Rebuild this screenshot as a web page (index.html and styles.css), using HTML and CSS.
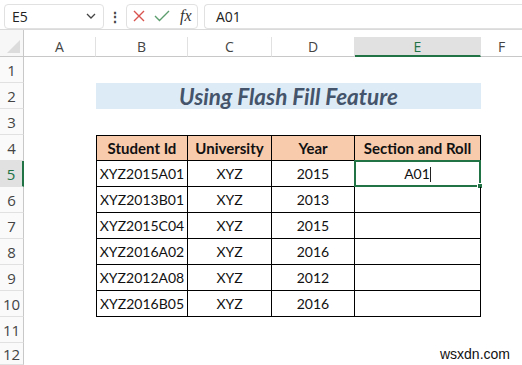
FILE: index.html
```html
<!DOCTYPE html>
<html lang="en">
<head>
<meta charset="UTF-8">
<title>Using Flash Fill Feature</title>
<link rel="stylesheet" href="styles.css">
</head>
<body>

<div class="formula-bar">
  <div class="name-box">
    <span>E5</span>
    <svg class="chevron" width="10" height="6" viewBox="0 0 10 6"><path d="M1 1 L5 5 L9 1" fill="none" stroke="#444" stroke-width="1.3"/></svg>
  </div>
  <div class="dots">&#8942;</div>
  <div class="fx-box">
    <svg width="14" height="14" viewBox="0 0 14 14"><path d="M2 2 L12 12 M12 2 L2 12" stroke="#d9534f" stroke-width="1.4" fill="none"/></svg>
    <svg width="16" height="14" viewBox="0 0 16 14"><path d="M1 7 L5.5 11.5 L15 2" stroke="#5c9e6e" stroke-width="1.4" fill="none"/></svg>
    <span class="fx">fx</span>
  </div>
  <div class="formula-input">A01</div>
</div>

<div class="sheet">
  <!-- column headers -->
  <div class="corner"><span class="tri"></span></div>
  <div class="col-head">A</div>
  <div class="col-head">B</div>
  <div class="col-head">C</div>
  <div class="col-head">D</div>
  <div class="col-head active">E</div>
  <div class="col-head last">F</div>

  <!-- row 1 -->
  <div class="row-head">1</div>
  <div></div><div></div><div></div><div></div><div></div><div></div>

  <!-- row 2 -->
  <div class="row-head">2</div>
  <div></div>
  <div class="title">Using Flash Fill Feature</div>
  <div></div>

  <!-- row 3 -->
  <div class="row-head">3</div>
  <div></div><div></div><div></div><div></div><div></div><div></div>

  <!-- row 4 -->
  <div class="row-head">4</div>
  <div></div>
  <div class="t th first">Student Id</div>
  <div class="t th">University</div>
  <div class="t th">Year</div>
  <div class="t th">Section and Roll</div>
  <div></div>

  <!-- row 5 -->
  <div class="row-head active">5</div>
  <div></div>
  <div class="t first">XYZ2015A01</div>
  <div class="t">XYZ</div>
  <div class="t">2015</div>
  <div class="t selected"><span>A01<i class="caret"></i></span><b class="handle"></b></div>
  <div></div>

  <div class="row-head">6</div>
  <div></div>
  <div class="t first">XYZ2013B01</div>
  <div class="t">XYZ</div>
  <div class="t">2013</div>
  <div class="t"></div>
  <div></div>

  <div class="row-head">7</div>
  <div></div>
  <div class="t first">XYZ2015C04</div>
  <div class="t">XYZ</div>
  <div class="t">2015</div>
  <div class="t"></div>
  <div></div>

  <div class="row-head">8</div>
  <div></div>
  <div class="t first">XYZ2016A02</div>
  <div class="t">XYZ</div>
  <div class="t">2016</div>
  <div class="t"></div>
  <div></div>

  <div class="row-head">9</div>
  <div></div>
  <div class="t first">XYZ2012A08</div>
  <div class="t">XYZ</div>
  <div class="t">2012</div>
  <div class="t"></div>
  <div></div>

  <div class="row-head">10</div>
  <div></div>
  <div class="t first">XYZ2016B05</div>
  <div class="t">XYZ</div>
  <div class="t">2016</div>
  <div class="t"></div>
  <div></div>

  <div class="row-head">11</div>
  <div></div><div></div><div></div><div></div><div></div><div></div>

  <div class="row-head">12</div>
  <div></div><div></div><div></div><div></div><div class="mark">wsxdn.com</div>
</div>

</body>
</html>
```

FILE: styles.css
```css
* {
  box-sizing: border-box;
}
body {
  margin: 0;
  width: 522px;
  height: 365px;
  overflow: hidden;
  background: #fff;
  font-family: "Open Sans", "Noto Sans", sans-serif;
  color: #333;
}
.formula-bar {
  display: flex;
  align-items: center;
  height: 30px;
  padding: 4px 0 1px 4px;
  border-bottom: 1px solid #dadada;
  font-size: 14px;
}
.name-box {
  width: 100px;
  height: 25px;
  border: 1px solid #e1e1e1;
  border-radius: 4px;
  display: flex;
  align-items: center;
  justify-content: space-between;
  padding: 0 7px 0 7px;
  color: #222;
}
.dots {
  width: 22px;
  text-align: center;
  font-size: 14px;
  font-weight: bold;
  color: #444;
}
.fx-box {
  width: 72px;
  height: 25px;
  border: 1px solid #e1e1e1;
  border-radius: 4px;
  display: flex;
  align-items: center;
  gap: 8px;
  padding-left: 5px;
}
.fx {
  font-family: "Liberation Serif", serif;
  font-style: italic;
  font-size: 16px;
  color: #333;
  margin-left: 2px;
}
.formula-input {
  flex: 1;
  height: 25px;
  margin-left: 6px;
  border: 1px solid #e1e1e1;
  border-right: none;
  border-radius: 4px 0 0 4px;
  display: flex;
  align-items: center;
  padding-left: 11px;
  color: #222;
}
.sheet {
  display: grid;
  grid-template-columns: 24px 72px 92px 84px 83px 126px 41px;
  grid-template-rows: 27px repeat(11, 26px) 22px;
  font-size: 14px;
}
.corner {
  border-right: 1px solid #c8c8c8;
  border-bottom: 1px solid #c8c8c8;
  background: #f7f7f7;
  position: relative;
}
.tri {
  position: absolute;
  right: 3px;
  bottom: 3px;
  width: 0;
  height: 0;
  border-left: 13px solid transparent;
  border-bottom: 13px solid #dcdcdc;
}
.col-head {
  margin-top: 7px;
  border-bottom: 1px solid #c8c8c8;
  border-right: 1px solid #e1e1e1;
  display: flex;
  align-items: center;
  justify-content: center;
  color: #444;
}
.col-head.last {
  border-right: none;
}
.col-head.active {
  background: #e1e1e1;
  color: #217346;
  border-bottom: 2px solid #217346;
}
.row-head {
  border-right: 1px solid #c8c8c8;
  border-bottom: 1px solid #e1e1e1;
  background: #fafafa;
  display: flex;
  align-items: center;
  justify-content: center;
  color: #444;
  font-size: 15px;
}
.row-head.active {
  background: #e1e1e1;
  color: #217346;
  border-right: 2px solid #217346;
}
.title {
  grid-column: 3 / 7;
  background: #ddebf7;
  color: #44546a;
  font-family: "Lato", sans-serif;
  font-weight: bold;
  font-style: italic;
  font-size: 22.5px;
  display: flex;
  align-items: center;
  justify-content: center;
}
.t {
  border-right: 1px solid #000;
  border-bottom: 1px solid #000;
  display: flex;
  align-items: center;
  justify-content: center;
  font-family: "Lato", sans-serif;
  font-size: 14px;
  color: #111;
  position: relative;
}
.t.first {
  border-left: 1px solid #000;
}
.th {
  border-top: 1px solid #000;
  background: #f8cbad;
  font-weight: bold;
  font-size: 15px;
}
.selected {
  border: 2px solid #217346;
  margin: -1px 0 0 -1px;
}
.caret {
  display: inline-block;
  width: 1px;
  height: 15px;
  background: #222;
  vertical-align: -3px;
}
.handle {
  position: absolute;
  right: -4px;
  bottom: -4px;
  width: 6px;
  height: 6px;
  background: #217346;
  border: 1px solid #fff;
}
.mark {
  grid-column: 6 / 8;
  display: flex;
  align-items: center;
  justify-content: flex-end;
  padding-right: 12px;
  font-family: "Liberation Sans", sans-serif;
  font-size: 14px;
  color: #111;
}
```
